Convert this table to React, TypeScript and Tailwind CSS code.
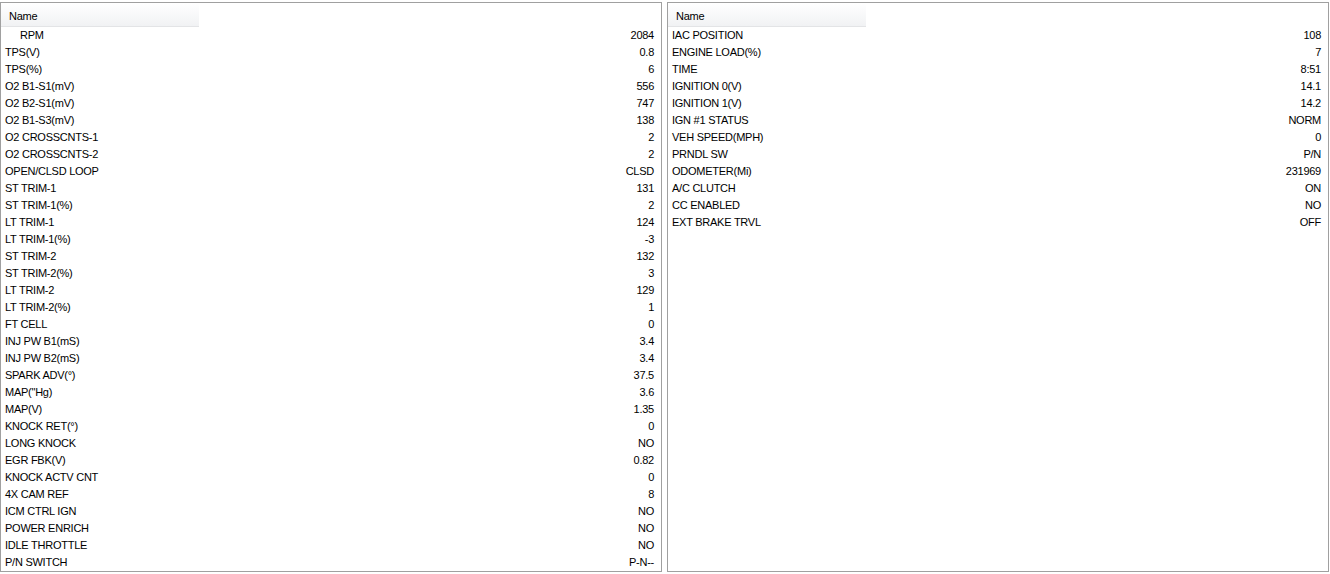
import React from "react";

const left: [string, string, boolean?][] = [
  ["RPM", "2084", true],
  ["TPS(V)", "0.8"],
  ["TPS(%)", "6"],
  ["O2 B1-S1(mV)", "556"],
  ["O2 B2-S1(mV)", "747"],
  ["O2 B1-S3(mV)", "138"],
  ["O2 CROSSCNTS-1", "2"],
  ["O2 CROSSCNTS-2", "2"],
  ["OPEN/CLSD LOOP", "CLSD"],
  ["ST TRIM-1", "131"],
  ["ST TRIM-1(%)", "2"],
  ["LT TRIM-1", "124"],
  ["LT TRIM-1(%)", "-3"],
  ["ST TRIM-2", "132"],
  ["ST TRIM-2(%)", "3"],
  ["LT TRIM-2", "129"],
  ["LT TRIM-2(%)", "1"],
  ["FT CELL", "0"],
  ["INJ PW B1(mS)", "3.4"],
  ["INJ PW B2(mS)", "3.4"],
  ["SPARK ADV(°)", "37.5"],
  ["MAP(\"Hg)", "3.6"],
  ["MAP(V)", "1.35"],
  ["KNOCK RET(°)", "0"],
  ["LONG KNOCK", "NO"],
  ["EGR FBK(V)", "0.82"],
  ["KNOCK ACTV CNT", "0"],
  ["4X CAM REF", "8"],
  ["ICM CTRL IGN", "NO"],
  ["POWER ENRICH", "NO"],
  ["IDLE THROTTLE", "NO"],
  ["P/N SWITCH", "P-N--"],
];

const right: [string, string, boolean?][] = [
  ["IAC POSITION", "108"],
  ["ENGINE LOAD(%)", "7"],
  ["TIME", "8:51"],
  ["IGNITION 0(V)", "14.1"],
  ["IGNITION 1(V)", "14.2"],
  ["IGN #1 STATUS", "NORM"],
  ["VEH SPEED(MPH)", "0"],
  ["PRNDL SW", "P/N"],
  ["ODOMETER(Mi)", "231969"],
  ["A/C CLUTCH", "ON"],
  ["CC ENABLED", "NO"],
  ["EXT BRAKE TRVL", "OFF"],
];

function Panel({ rows }: { rows: [string, string, boolean?][] }) {
  return (
    <div className="w-[662px] h-[570px] border border-[#a0a0a0] bg-white flex flex-col overflow-hidden">
      <div className="h-[24px] w-[198px] flex items-center pt-[3px] pl-[8px] bg-gradient-to-b from-white to-[#f1f2f4] border-b border-[#e3e4e6] text-[11px] tracking-[-0.25px] text-black">
        Name
      </div>
      <div className="flex flex-col pl-[4px] pr-[7px]">
        {rows.map(([n, v, ind]) => (
          <div key={n} className="h-[17px] flex items-center justify-between text-[11px] tracking-[-0.25px] text-black">
            <span className={ind ? "pl-[15px]" : ""}>{n}</span>
            <span>{v}</span>
          </div>
        ))}
      </div>
    </div>
  );
}

export default function App() {
  return (
    <div
      className="w-[1330px] h-[574px] bg-white flex gap-[5px] pt-[2px] overflow-hidden"
      style={{ fontFamily: "'Liberation Sans', Arial, sans-serif" }}
    >
      <Panel rows={left} />
      <Panel rows={right} />
    </div>
  );
}
